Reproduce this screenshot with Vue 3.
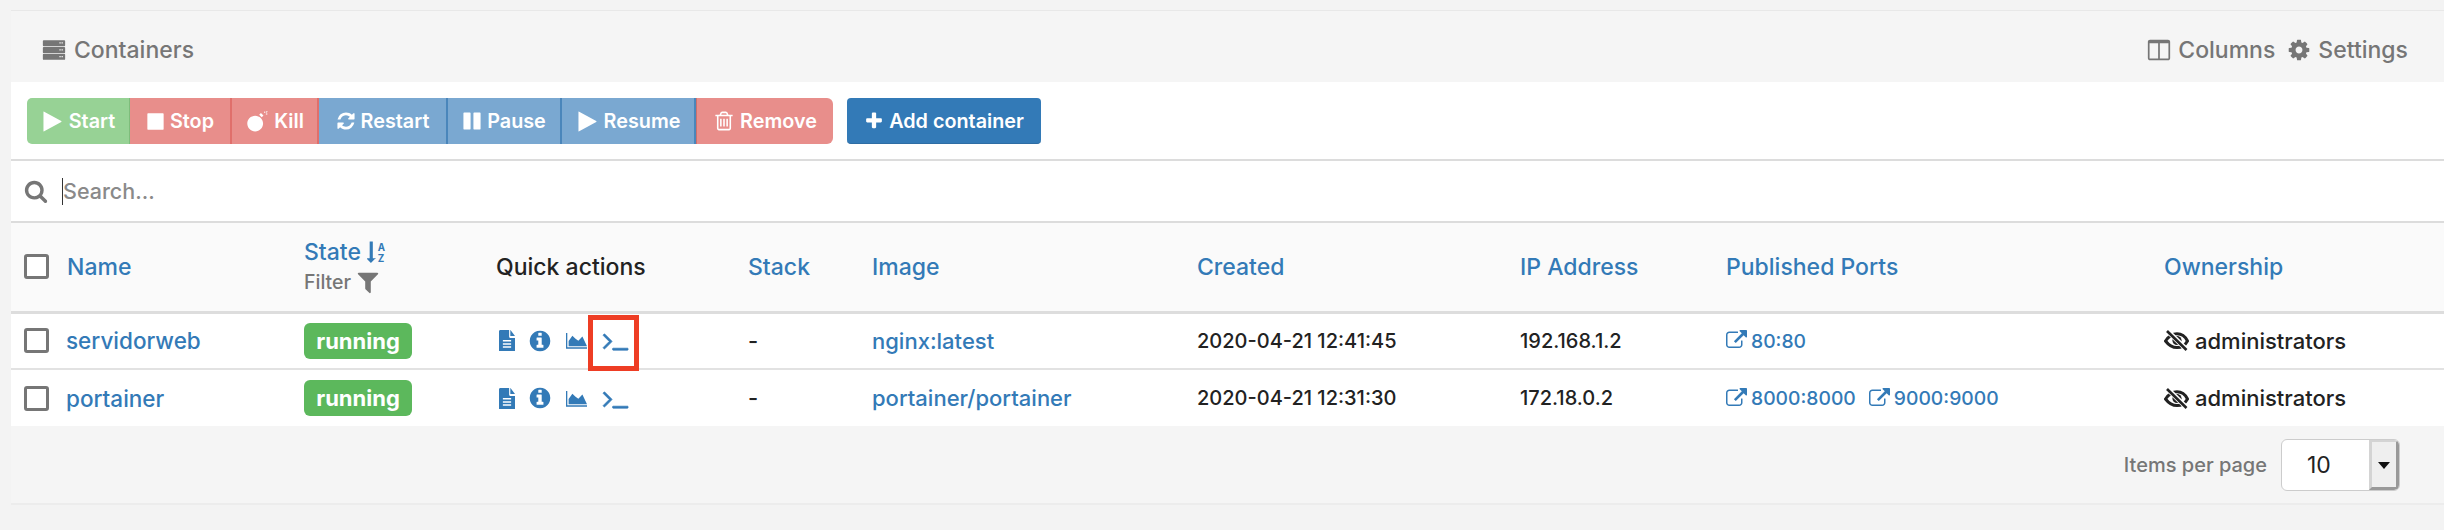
<script setup>
const P = {
  play: 'M1576 927l-1328 738q-23 13-39.5 3t-16.5-36v-1472q0-26 16.5-36t39.5 3l1328 738q23 13 23 31t-23 31z',
  stop: 'M1664 192v1408q0 26-19 45t-45 19h-1408q-26 0-45-19t-19-45v-1408q0-26 19-45t45-19h1408q26 0 45 19t19 45z',
  bomb: 'M760 500c330 0 590 270 590 590s-260 590-590 590-590-270-590-590 260-590 590-590zM1060 420l190 190 130-130-190-190zM1440 190l70 0 0 110-70 0zM1560 340l110 0 0 70-110 0zM1640 150l50 50-80 80-50-50z',
  refresh: 'M1639 1056q0 5-1 7-64 268-268 434.5t-478 166.5q-146 0-282.5-55t-243.5-157l-129 129q-19 19-45 19t-45-19-19-45v-448q0-26 19-45t45-19h448q26 0 45 19t19 45-19 45l-137 137q71 66 161 102t187 36q134 0 250-65t186-179q11-17 53-117 8-23 30-23h192q13 0 22.5 9.5t9.5 22.5zm25-800v448q0 26-19 45t-45 19h-448q-26 0-45-19t-19-45 19-45l138-138q-148-137-349-137-134 0-250 65t-186 179q-11 17-53 117-8 23-30 23h-199q-13 0-22.5-9.5t-9.5-22.5v-7q65-268 270-434.5t480-166.5q146 0 284 55.5t245 156.5l130-129q19-19 45-19t45 19 19 45z',
  pause: 'M1664 192v1408q0 26-19 45t-45 19h-512q-26 0-45-19t-19-45v-1408q0-26 19-45t45-19h512q26 0 45 19t19 45zm-896 0v1408q0 26-19 45t-45 19h-512q-26 0-45-19t-19-45v-1408q0-26 19-45t45-19h512q26 0 45 19t19 45z',
  trash: 'M704 736v576q0 14-9 23t-23 9h-64q-14 0-23-9t-9-23v-576q0-14 9-23t23-9h64q14 0 23 9t9 23zm256 0v576q0 14-9 23t-23 9h-64q-14 0-23-9t-9-23v-576q0-14 9-23t23-9h64q14 0 23 9t9 23zm256 0v576q0 14-9 23t-23 9h-64q-14 0-23-9t-9-23v-576q0-14 9-23t23-9h64q14 0 23 9t9 23zm128 724v-948h-896v948q0 22 7 40.5t14.5 27 10.5 8.5h832q3 0 10.5-8.5t14.5-27 7-40.5zm-672-1076h448l-48-117q-7-9-17-11h-317q-10 2-17 11zm928 32v64q0 14-9 23t-23 9h-96v948q0 83-47 143.5t-113 60.5h-832q-66 0-113-58.5t-47-141.5v-952h-96q-14 0-23-9t-9-23v-64q0-14 9-23t23-9h309l70-167q15-37 54-63t79-26h320q40 0 79 26t54 63l70 167h309q14 0 23 9t9 23z',
  plus: 'M1600 736v192q0 40-28 68t-68 28h-416v416q0 40-28 68t-68 28h-192q-40 0-68-28t-28-68v-416h-416q-40 0-68-28t-28-68v-192q0-40 28-68t68-28h416v-416q0-40 28-68t68-28h192q40 0 68 28t28 68v416h416q40 0 68 28t28 68z',
  search: 'M1216 832q0-185-131.5-316.5t-316.5-131.5-316.5 131.5-131.5 316.5 131.5 316.5 316.5 131.5 316.5-131.5 131.5-316.5zm512 832q0 52-38 90t-90 38q-54 0-90-38l-343-342q-179 124-399 124-143 0-273.5-55.5t-225-150-150-225-55.5-273.5 55.5-273.5 150-225 225-150 273.5-55.5 273.5 55.5 225 150 150 225 55.5 273.5q0 220-124 399l343 343q37 37 37 90z',
  info: 'M1152 1376v-160q0-14-9-23t-23-9h-96v-512q0-14-9-23t-23-9h-320q-14 0-23 9t-9 23v160q0 14 9 23t23 9h96v320h-96q-14 0-23 9t-9 23v160q0 14 9 23t23 9h448q14 0 23-9t9-23zm-128-896v-160q0-14-9-23t-23-9h-192q-14 0-23 9t-9 23v160q0 14 9 23t23 9h192q14 0 23-9t9-23zm640 416q0 209-103 385.5t-279.5 279.5-385.5 103-385.5-103-279.5-279.5-103-385.5 103-385.5 279.5-279.5 385.5-103 385.5 103 279.5 279.5 103 385.5z',
  file: 'M1100 128v480q0 40 28 68t68 28h468v960q0 40-28 68t-68 28H224q-40 0-68-28t-28-68V224q0-40 28-68t68-28zM1230 128l434 434v12h-448V128zM500 860v110h792V860zM500 1090v110h792v-110zM500 1320v110h792v-110z',
  chart: 'M1792 1472v128H0V256h112v1216zM1400 560l392 816H224V930l320-440 270 250 240 170z',
  terminal: 'M649 983l-466 466q-10 10-23 10t-23-10l-50-50q-10-10-10-23t10-23l393-393-393-393q-10-10-10-23t10-23l50-50q10-10 23-10t23 10l466 466q10 10 10 23t-10 23zm1079 457v64q0 14-9 23t-23 9h-960q-14 0-23-9t-9-23v-64q0-14 9-23t23-9h960q14 0 23 9t9 23z',
  ext: 'M1408 928v320q0 119-84.5 203.5t-203.5 84.5h-832q-119 0-203.5-84.5t-84.5-203.5v-832q0-119 84.5-203.5t203.5-84.5h704q14 0 23 9t9 23v64q0 14-9 23t-23 9h-704q-66 0-113 47t-47 113v832q0 66 47 113t113 47h832q66 0 113-47t47-113v-320q0-14 9-23t23-9h64q14 0 23 9t9 23zm384-864v512q0 26-19 45t-45 19-45-19l-176-176-652 652q-10 10-23 10t-23-10l-114-114q-10-10-10-23t10-23l652-652-176-176q-19-19-19-45t19-45 45-19h512q26 0 45 19t19 45z',
  filter: 'M1595 295q17 41-14 70l-493 493v742q0 42-39 59-13 5-25 5-27 0-45-19l-256-256q-19-19-19-45v-486l-493-493q-31-29-14-70 17-39 59-39h1280q42 0 59 39z',
  cog: 'M1152 896q0-106-75-181t-181-75-181 75-75 181 75 181 181 75 181-75 75-181zm512-109v222q0 12-8 23t-20 13l-185 28q-19 54-39 91 35 50 107 138 10 12 10 25t-9 23q-27 37-99 108t-94 71q-12 0-26-9l-138-108q-44 23-91 38-16 136-29 186-7 28-36 28h-222q-14 0-24.5-8.5t-11.5-21.5l-28-184q-49-16-90-37l-141 107q-10 9-25 9-14 0-25-11-126-114-165-168-7-10-7-23 0-12 8-23 15-21 51-66.5t54-70.5q-27-50-41-99l-183-27q-13-2-21-12.5t-8-23.5v-222q0-12 8-23t19-13l186-28q14-46 39-92-40-57-107-138-10-12-10-24 0-10 9-23 26-36 98.5-107.5t94.5-71.5q13 0 26 10l138 107q44-23 91-38 16-136 29-186 7-28 36-28h222q14 0 24.5 8.5t11.5 21.5l28 184q49 16 90 37l142-107q9-9 24-9 13 0 25 10 129 119 165 170 7 8 7 22 0 12-8 23-15 21-51 66.5t-54 70.5q26 50 41 98l183 28q13 2 21 12.5t8 23.5z',
  columns: 'M224 1536h608v-1152h-640v1120q0 13 9.5 22.5t22.5 9.5zm1376-32v-1120h-640v1152h608q13 0 22.5-9.5t9.5-22.5zm128-1216v1216q0 66-47 113t-113 47h-1344q-66 0-113-47t-47-113v-1216q0-66 47-113t113-47h1344q66 0 113 47t47 113z',
  server: 'M128 160h1536q64 0 64 64v320q0 64-64 64H128q-64 0-64-64V224q0-64 64-64zM128 672h1536q64 0 64 64v320q0 64-64 64H128q-64 0-64-64V736q0-64 64-64zM128 1184h1536q64 0 64 64v320q0 64-64 64H128q-64 0-64-64v-320q0-64 64-64zM1300 320v96h96v-96zM1460 320v96h96v-96zM1300 832v96h96v-96zM1460 832v96h96v-96zM1300 1344v96h96v-96zM1460 1344v96h96v-96z',
  sortArrow: 'M640 1472l-320 320-320-320q-20-20-10-40 10-24 36-24h192V64q0-14 9-23t23-9h192q14 0 23 9t9 23v1344h192q28 0 36 24t-10 40z'
}
const actions = [
  { label: 'Start', icon: 'play', cls: 'green', w: 103 },
  { label: 'Stop', icon: 'stop', cls: 'red', w: 102 },
  { label: 'Kill', icon: 'bomb', cls: 'red', w: 87 },
  { label: 'Restart', icon: 'refresh', cls: 'blue', w: 129 },
  { label: 'Pause', icon: 'pause', cls: 'blue', w: 114 },
  { label: 'Resume', icon: 'play', cls: 'blue', w: 134 },
  { label: 'Remove', icon: 'trash', cls: 'red', w: 137 }
]
const rows = [
  { name: 'servidorweb', image: 'nginx:latest', created: '2020-04-21 12:41:45', ip: '192.168.1.2', ports: ['80:80'], mark: true },
  { name: 'portainer', image: 'portainer/portainer', created: '2020-04-21 12:31:30', ip: '172.18.0.2', ports: ['8000:8000', '9000:9000'], mark: false }
]
</script>

<template>
  <div class="page">
    <section class="card">
      <header class="head">
        <div class="title">
          <svg class="i i-server" viewBox="0 0 1792 1792"><path :d="P.server" fill-rule="evenodd" /></svg>
          <span>Containers</span>
        </div>
        <div class="tools">
          <span class="tool"><svg class="i i-tool" viewBox="0 0 1792 1792"><path :d="P.columns" /></svg>Columns</span>
          <span class="tool"><svg class="i i-tool" viewBox="0 0 1792 1792"><path :d="P.cog" /></svg>Settings</span>
        </div>
      </header>

      <div class="actions">
        <div class="group">
          <button v-for="a in actions" :key="a.label" class="btn" :class="a.cls" :style="{ width: a.w + 'px' }">
            <svg class="i i-btn" :class="'b-' + a.icon" viewBox="0 0 1792 1792"><path :d="P[a.icon]" /></svg>{{ a.label }}
          </button>
        </div>
        <button class="btn add">
          <svg class="i i-btn" viewBox="0 0 1792 1792"><path :d="P.plus" /></svg>Add container
        </button>
      </div>

      <div class="search">
        <svg class="i i-search" viewBox="0 0 1792 1792"><path :d="P.search" /></svg>
        <span class="caret"></span>
        <span class="ph">Search...</span>
      </div>

      <table class="tbl">
        <colgroup>
          <col class="c1" /><col class="c2" /><col class="c3" /><col class="c4" /><col class="c5" />
          <col class="c6" /><col class="c7" /><col class="c8" /><col />
        </colgroup>
        <thead>
          <tr>
            <th class="first"><span class="namecell"><span class="check"></span><a>Name</a></span></th>
            <th>
              <div class="statehead">
                <a class="statelink">State
                  <svg class="i i-sort" viewBox="0 0 1792 1792">
                    <path :d="P.sortArrow" />
                    <text x="880" y="780" class="sorttext">A</text>
                    <text x="880" y="1720" class="sorttext">Z</text>
                  </svg>
                </a>
                <span class="filter">Filter <svg class="i i-filter" viewBox="0 0 1792 1792"><path :d="P.filter" /></svg></span>
              </div>
            </th>
            <th class="dark">Quick actions</th>
            <th><a>Stack</a></th>
            <th><a>Image</a></th>
            <th><a>Created</a></th>
            <th><a>IP Address</a></th>
            <th><a>Published Ports</a></th>
            <th><a>Ownership</a></th>
          </tr>
        </thead>
        <tbody>
          <tr v-for="r in rows" :key="r.name">
            <td class="first"><span class="namecell"><span class="check"></span><a class="cname">{{ r.name }}</a></span></td>
            <td><span class="badge">running</span></td>
            <td>
              <span class="quick">
                <svg class="i q-file" viewBox="128 128 1536 1536" preserveAspectRatio="none"><path :d="P.file" fill-rule="evenodd" /></svg>
                <svg class="i q-info" viewBox="0 0 1792 1792"><path :d="P.info" /></svg>
                <svg class="i q-chart" viewBox="0 0 1792 1792"><path :d="P.chart" /></svg>
                <span class="termwrap">
                  <svg class="i i-term" viewBox="0 0 1792 1792"><path :d="P.terminal" /></svg>
                  <span v-if="r.mark" class="mark"></span>
                </span>
              </span>
            </td>
            <td>-</td>
            <td><a class="cimage">{{ r.image }}</a></td>
            <td class="num">{{ r.created }}</td>
            <td class="num">{{ r.ip }}</td>
            <td>
              <span class="ports">
                <a v-for="p in r.ports" :key="p" class="port"><svg class="i i-ext" viewBox="0 0 1792 1792"><path :d="P.ext" /></svg>{{ p }}</a>
              </span>
            </td>
            <td>
              <span class="owner">
                <svg class="i-eye" viewBox="0 0 25 21">
                  <path d="M1.5 11C5 6 9 3.8 13 3.8S21 6 23.5 11C21 15.6 17 17.6 13 17.6S5 15.6 1.5 11Z" fill="none" stroke="#222" stroke-width="3" />
                  <circle cx="13" cy="10.5" r="4.6" fill="#222" />
                  <path d="M3 0.5L23 20" stroke="#fff" stroke-width="5" />
                  <path d="M3 1L22.5 20" stroke="#222" stroke-width="2.6" />
                </svg>administrators
              </span>
            </td>
          </tr>
        </tbody>
      </table>

      <footer class="foot">
        <span class="ipp">Items per page</span>
        <div class="select">
          <span class="val">10</span>
          <span class="arrow"></span>
        </div>
      </footer>
    </section>
  </div>
</template>

<style>
html, body { margin: 0; background: #f2f2f2; }
</style>

<style scoped>
.page {
  box-sizing: border-box;
  width: 2444px;
  height: 530px;
  padding: 10px 0 0 11px;
  background: #f3f3f3;
  font-family: Inter, "Liberation Sans", sans-serif;
  font-size: 22px;
  font-weight: 500;
  color: #222;
  overflow: hidden;
}
.card {
  display: flex;
  flex-direction: column;
  height: 495px;
  background: #fff;
  border-top: 1px solid #e8e8e8;
  box-sizing: border-box;
  border-bottom: 2px solid #ececec;
}
.i { fill: currentColor; flex: none; }
.head {
  display: flex;
  justify-content: space-between;
  align-items: center;
  box-sizing: border-box;
  height: 71px;
  padding: 7px 36px 0 31px;
  background: #f5f5f5;
  color: #767676;
  font-size: 23px;
}
.title { display: flex; align-items: center; gap: 8px; }
.i-server { width: 24px; height: 24px; }
.tools { display: flex; gap: 12px; }
.tool { display: flex; align-items: center; gap: 7px; }
.i-tool { width: 24px; height: 24px; }
.actions {
  display: flex;
  align-items: flex-start;
  gap: 14px;
  height: 79px;
  padding: 16px 0 0 16px;
  box-sizing: border-box;
  border-bottom: 2px solid #dcdcdc;
}
.group { display: flex; }
.btn {
  display: flex;
  align-items: center;
  justify-content: center;
  gap: 5px;
  height: 46px;
  padding: 0;
  border: 0;
  box-sizing: border-box;
  color: #fff;
  font: 600 19.8px Inter, "Liberation Sans", sans-serif;
}
.green { background: #97d295; border-radius: 5px 0 0 5px; border-right: 1px solid #7dbd7b; }
.red { background: #e88e8b; border-right: 2px solid #e06f6b; }
.blue { background: #7aa8d1; border-right: 2px solid #4a86bb; }
.group .btn:last-child { border-right: 0; border-radius: 0 6px 6px 0; border-left: 1px solid #c9706e; }
.add { width: 194px; background: #337ab7; border-radius: 4px; border-bottom: 1px solid #2e6da4; }
.i-btn { width: 20px; height: 20px; }
.b-play { width: 23px; height: 23px; }
.b-stop { width: 19px; height: 19px; }
.b-bomb { width: 24px; height: 24px; }
.b-trash { width: 22px; height: 22px; }
.search {
  display: flex;
  align-items: center;
  height: 60px;
  padding-left: 13px;
  color: #767676;
}
.i-search { width: 24px; height: 24px; margin-right: 14px; }
.caret { width: 1px; height: 27px; background: #333; }
.ph { color: #8a8a8a; font-size: 21.5px; }
.tbl { width: 100%; border-collapse: collapse; table-layout: fixed; }
.c1 { width: 293px; } .c2 { width: 192px; } .c3 { width: 252px; } .c4 { width: 124px; }
.c5 { width: 325px; } .c6 { width: 323px; } .c7 { width: 206px; } .c8 { width: 438px; }
th, td { padding: 0; text-align: left; font-weight: 500; white-space: nowrap; }
thead tr { height: 90px; background: #fafafa; border-top: 2px solid #dcdcdc; }
thead th { border-bottom: 3px solid #ddd; font-size: 23px; font-weight: 500; }
tbody tr { height: 57px; }
tbody tr + tr { border-top: 2px solid #e2e2e2; }
a { color: #337ab7; }
th.dark { color: #222; }
.first { padding-left: 13px; }
.namecell { display: flex; align-items: center; gap: 18px; }
.check {
  box-sizing: border-box;
  width: 25px;
  height: 25px;
  background: #fff;
  border: 3px solid #767676;
  border-radius: 3px;
}
.cname { margin-left: -1px; font-size: 22.5px; }
.num { font-size: 20px; }
.statehead { display: flex; flex-direction: column; gap: 3px; }
.i-sort { width: 22px; height: 22px; vertical-align: -3px; }
.sorttext { font: 700 800px Inter, sans-serif; fill: #337ab7; }
.filter { display: flex; align-items: center; gap: 4px; color: #767676; font-size: 19.5px; }
.i-filter { width: 26px; height: 26px; }
.badge {
  display: inline-block;
  width: 108px;
  text-align: center;
  height: 36px;
  line-height: 36px;
  border-radius: 6px;
  background: #5cb85c;
  color: #fff;
  font-weight: 700;
  font-size: 22px;
}
.quick { display: flex; align-items: center; color: #337ab7; }
.q-file { width: 16px; height: 21px; margin-left: 3px; }
.q-info { width: 24px; height: 24px; margin-left: 13px; }
.q-chart { width: 21px; height: 21px; margin-left: 14px; }
.termwrap { position: relative; display: flex; margin-left: 15px; }
.i-term { width: 27px; height: 27px; stroke: currentColor; stroke-width: 50; }
.mark {
  position: absolute;
  left: -14px;
  top: -12px;
  width: 51px;
  height: 56px;
  box-sizing: border-box;
  border: 5px solid #ee3d24;
}
.ports { display: flex; gap: 13px; font-size: 19.3px; }
.port { display: flex; align-items: center; gap: 4px; }
.i-ext { width: 21px; height: 21px; }
.owner { display: flex; align-items: center; gap: 6px; }
.i-eye { width: 25px; height: 21px; flex: none; }
.foot {
  flex: 1;
  display: flex;
  align-items: center;
  justify-content: flex-end;
  gap: 14px;
  padding-right: 44px;
  background: #f5f5f5;
}
.ipp { color: #767676; font-size: 20px; font-weight: 500; }
.select {
  display: flex;
  box-sizing: border-box;
  width: 119px;
  height: 52px;
  background: #fff;
  border: 1px solid #ccc;
  border-radius: 6px;
  overflow: hidden;
}
.val { flex: 1; display: flex; align-items: center; padding-left: 25px; font-size: 23px; font-weight: 400; }
.arrow {
  position: relative;
  width: 30px;
  background: #efefef;
  border-left: 3px solid #d4d4d4;
  border-right: 3px solid #999;
  border-top: 2px solid #d4d4d4;
  border-bottom: 3px solid #999;
  box-sizing: border-box;
}
.arrow::after {
  content: "";
  position: absolute;
  left: 6px;
  top: 20px;
  border: 6px solid transparent;
  border-top: 7px solid #111;
}
</style>
